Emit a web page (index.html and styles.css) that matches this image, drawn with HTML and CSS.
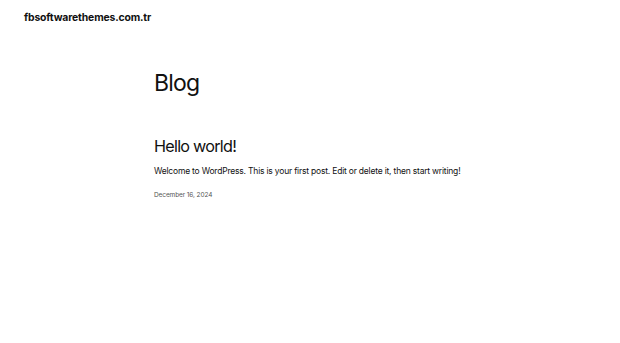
FILE: index.html
```html
<!DOCTYPE html>
<html lang="en">
<head>
<meta charset="utf-8">
<title>Blog – fbsoftwarethemes.com.tr</title>
<link rel="stylesheet" href="styles.css">
</head>
<body>
<header class="site-header">
  <a class="site-title" href="#">fbsoftwarethemes.com.tr</a>
</header>
<main class="content">
  <h1 class="page-title">Blog</h1>
  <article class="post">
    <h2 class="post-title">Hello world!</h2>
    <p class="post-excerpt">Welcome to WordPress. This is your first post. Edit or delete it, then start writing!</p>
    <time class="post-date">December 16, 2024</time>
  </article>
</main>
</body>
</html>
```
FILE: styles.css
```css
html, body {
  margin: 0;
  padding: 0;
  background: #ffffff;
  color: #111111;
  font-family: Inter, "Noto Sans", sans-serif;
}
.site-header {
  padding: 5px 24px 0;
  height: 22px;
}
.site-title {
  font-size: 10.4px;
  font-weight: 700;
  color: #111111;
  text-decoration: none;
  letter-spacing: -0.15px;
  line-height: 14px;
}
.content {
  width: 312px;
  margin: 0 auto;
  padding-top: 41px;
}
.page-title {
  margin: 0;
  font-size: 23px;
  font-weight: 400;
  line-height: 30px;
  letter-spacing: -0.8px;
}
.post {
  margin-top: 37px;
  display: flex;
  flex-direction: column;
}
.post-title {
  margin: 0;
  font-size: 16.2px;
  font-weight: 400;
  line-height: 22px;
  letter-spacing: -0.75px;
}
.post-excerpt {
  margin: 8px 0 0;
  font-size: 8.5px;
  line-height: 13px;
  letter-spacing: -0.2px;
  white-space: nowrap;
}
.post-date {
  margin-top: 12px;
  font-size: 6.5px;
  line-height: 10px;
  letter-spacing: -0.1px;
  color: #555555;
}
```
